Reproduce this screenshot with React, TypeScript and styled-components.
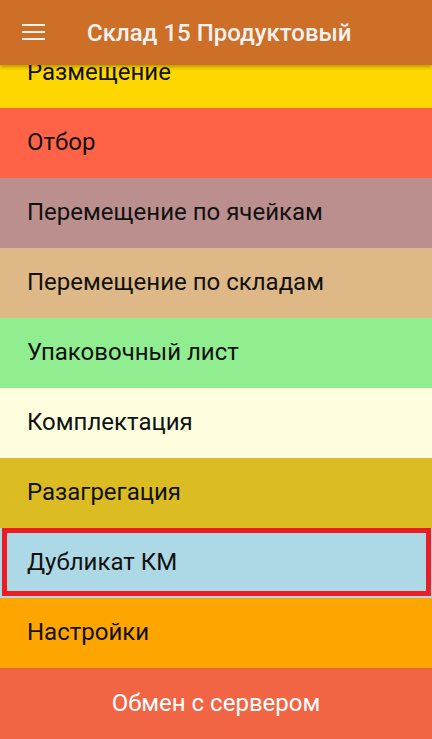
import { useLayoutEffect, useRef } from 'react';
import styled, { createGlobalStyle } from 'styled-components';

const GlobalStyle = createGlobalStyle`
    html, body {
        margin: 0;
        padding: 0;
        height: 100%;
    }
    #root {
        height: 100%;
    }
    * {
        box-sizing: border-box;
    }
`

const Screen = styled.div`
    width: 432px;
    height: 739px;
    display: flex;
    flex-direction: column;
    overflow: hidden;
    font-family: Roboto, "Noto Sans", sans-serif;
    background: #fafafa;
`

const Toolbar = styled.header`
    position: relative;
    z-index: 2;
    height: 65px;
    flex-shrink: 0;
    display: flex;
    align-items: center;
    background: #cd6f27;
    box-shadow: 0 2px 4px rgba(0, 0, 0, 0.3);
`

const MenuButton = styled.button`
    width: 66px;
    height: 65px;
    padding: 0 0 0 22px;
    display: flex;
    align-items: center;
    border: none;
    background: transparent;
    cursor: pointer;
`

const Title = styled.h1`
    margin: 0 0 0 21px;
    font-size: 24px;
    font-weight: 500;
    color: #f2f2f2;
`

const MenuList = styled.div`
    flex: 1;
    overflow: hidden;
`

const MenuItem = styled.div<{ $bg: string }>`
    position: relative;
    height: 70px;
    display: flex;
    align-items: center;
    padding: 0 0 3px 27px;
    background: ${(p) => p.$bg};
    font-size: 24px;
    color: #111;
`

const Selection = styled.div`
    position: absolute;
    top: 0;
    left: 2px;
    right: 1px;
    bottom: 2px;
    border: 5px solid #ec1c24;
    pointer-events: none;
`

const SyncButton = styled.button`
    height: 71px;
    flex-shrink: 0;
    padding: 0 0 2px 0;
    border: none;
    background: #f26544;
    color: #fff;
    font-family: Roboto, "Noto Sans", sans-serif;
    font-size: 24px;
    cursor: pointer;
`

const items = [
    { title: "Размещение", bg: "#ffd700" },
    { title: "Отбор", bg: "#ff6347" },
    { title: "Перемещение по ячейкам", bg: "#bc8f8f" },
    { title: "Перемещение по складам", bg: "#deb887" },
    { title: "Упаковочный лист", bg: "#90ee90" },
    { title: "Комплектация", bg: "#ffffe0" },
    { title: "Разагрегация", bg: "#dbbd23" },
    { title: "Дубликат КМ", bg: "#add8e6", selected: true },
    { title: "Настройки", bg: "#ffa500" },
]

const HamburgerIcon = () => (
    <svg width="23" height="17" viewBox="0 0 23 17">
        <rect x="0" y="0" width="23" height="2" fill="#f2f2f2" />
        <rect x="0" y="7" width="23" height="2" fill="#f2f2f2" />
        <rect x="0" y="14" width="23" height="2" fill="#f2f2f2" />
    </svg>
)

const App = () => {
    const listRef = useRef<HTMLDivElement>(null)

    // list is scrolled a bit, first row sits partly under the toolbar
    useLayoutEffect(() => {
        if (listRef.current) listRef.current.scrollTop = 28
    }, [])

    return (
        <Screen>
            <GlobalStyle />
            <Toolbar>
                <MenuButton aria-label="menu"><HamburgerIcon /></MenuButton>
                <Title>Склад 15 Продуктовый</Title>
            </Toolbar>
            <MenuList ref={listRef}>
                {items.map((item) => (
                    <MenuItem key={item.title} $bg={item.bg}>
                        {item.title}
                        {item.selected ? <Selection /> : null}
                    </MenuItem>
                ))}
            </MenuList>
            <SyncButton>Обмен с сервером</SyncButton>
        </Screen>
    )
}

export default App
